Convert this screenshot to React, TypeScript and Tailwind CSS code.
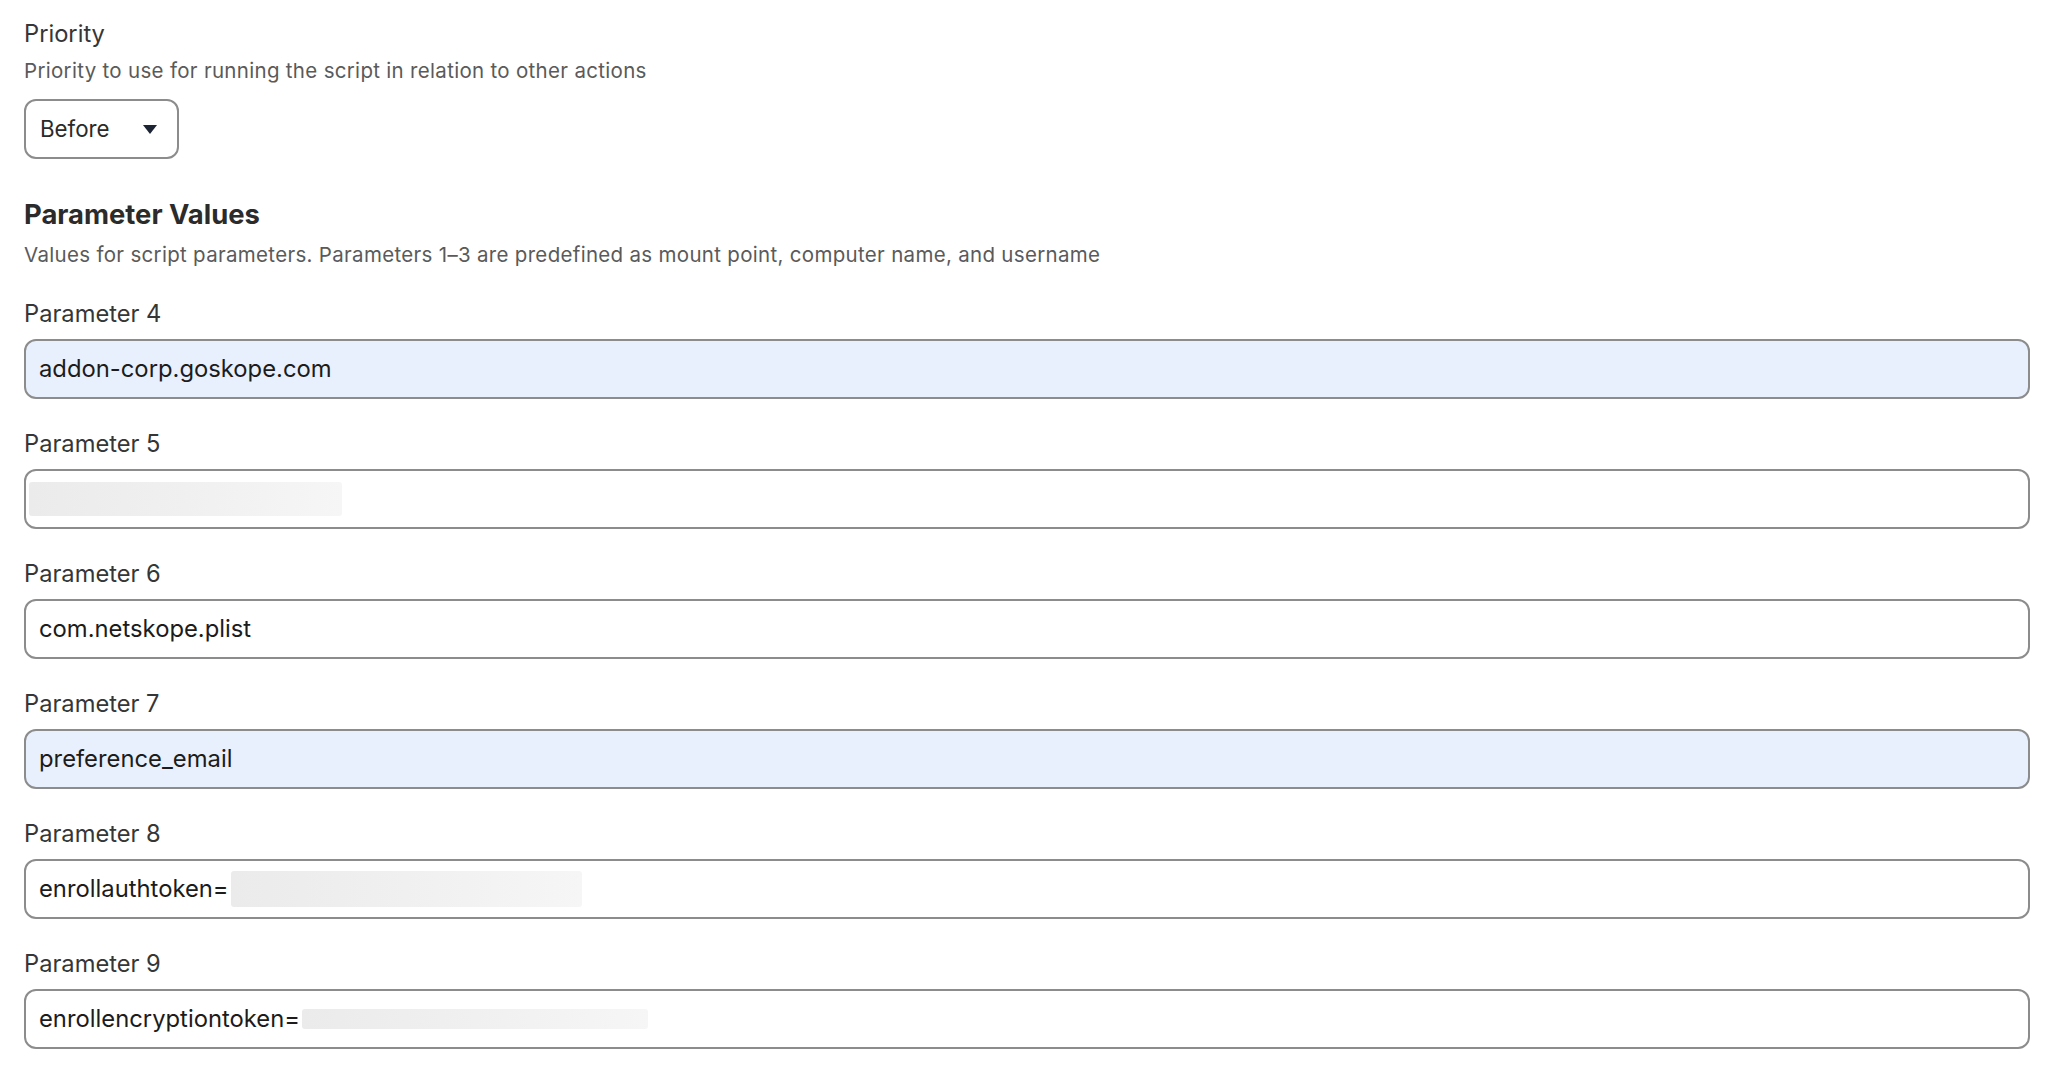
import React from 'react';

type Param = {
  label: string;
  value?: string;
  filled?: boolean;
  redact?: { offset: number; width: number; height: number };
};

const params: Param[] = [
  { label: 'Parameter 4', value: 'addon-corp.goskope.com', filled: true },
  { label: 'Parameter 5', redact: { offset: -10, width: 313, height: 34 } },
  { label: 'Parameter 6', value: 'com.netskope.plist' },
  { label: 'Parameter 7', value: 'preference_email', filled: true },
  { label: 'Parameter 8', value: 'enrollauthtoken=', redact: { offset: 2, width: 351, height: 36 } },
  { label: 'Parameter 9', value: 'enrollencryptiontoken=', redact: { offset: 2, width: 346, height: 20 } }
];

const Redaction = ({ offset, width, height }: { offset: number; width: number; height: number }) => (
  <span
    className="inline-block shrink-0 rounded-[3px] bg-gradient-to-r from-[#ebebeb] via-[#f0f0f0] to-[#f6f6f6]"
    style={{ marginLeft: offset, width, height }}
  />
);

const ParamField = ({ label, value, filled, redact }: Param) => (
  <div className="mt-[29px] first:mt-[28px]">
    <div className="text-[23.7px] leading-[32px] text-[#363636]">{label}</div>
    <div
      className={
        'mt-[9px] flex h-[60px] w-full items-center rounded-[12px] border-2 border-[#8c8c8c] pl-[13px] text-[23.8px] text-[#1c1c1c] ' +
        (filled ? 'bg-[#e8f0fe]' : 'bg-white')
      }
    >
      {value && <span className="whitespace-pre">{value}</span>}
      {redact && <Redaction {...redact} />}
    </div>
  </div>
);

export default function App() {
  return (
    <div
      className="min-h-screen bg-white pl-6 pr-[18px] pt-[18px] pb-8"
      style={{ fontFamily: 'Inter, "Noto Sans", sans-serif' }}
    >
      <div className="text-[23.7px] leading-[32px] text-[#363636]">Priority</div>
      <div className="mt-[7px] text-[20.5px] leading-[28px] tracking-[0.015em] text-[#5a5a5a]">
        Priority to use for running the script in relation to other actions
      </div>
      <div className="mt-[14px] flex h-[60px] w-[155px] items-center justify-between rounded-[12px] border-2 border-[#8c8c8c] pl-[14px] pr-[20px] text-[22.3px] text-[#2a2a2a]">
        <span>Before</span>
        <svg width="14" height="9" viewBox="0 0 14 9" className="mt-[1px]">
          <polygon points="0,0 14,0 7,9" fill="#1d2433" />
        </svg>
      </div>

      <div className="mt-[37px] text-[27.4px] font-bold leading-[36px] text-[#2b2b2b]">Parameter Values</div>
      <div className="mt-[9px] text-[20.5px] leading-[28px] tracking-[0.015em] text-[#5a5a5a]">
        Values for script parameters. Parameters 1–3 are predefined as mount point, computer name, and username
      </div>

      {params.map(p => (
        <ParamField key={p.label} {...p} />
      ))}
    </div>
  );
}
